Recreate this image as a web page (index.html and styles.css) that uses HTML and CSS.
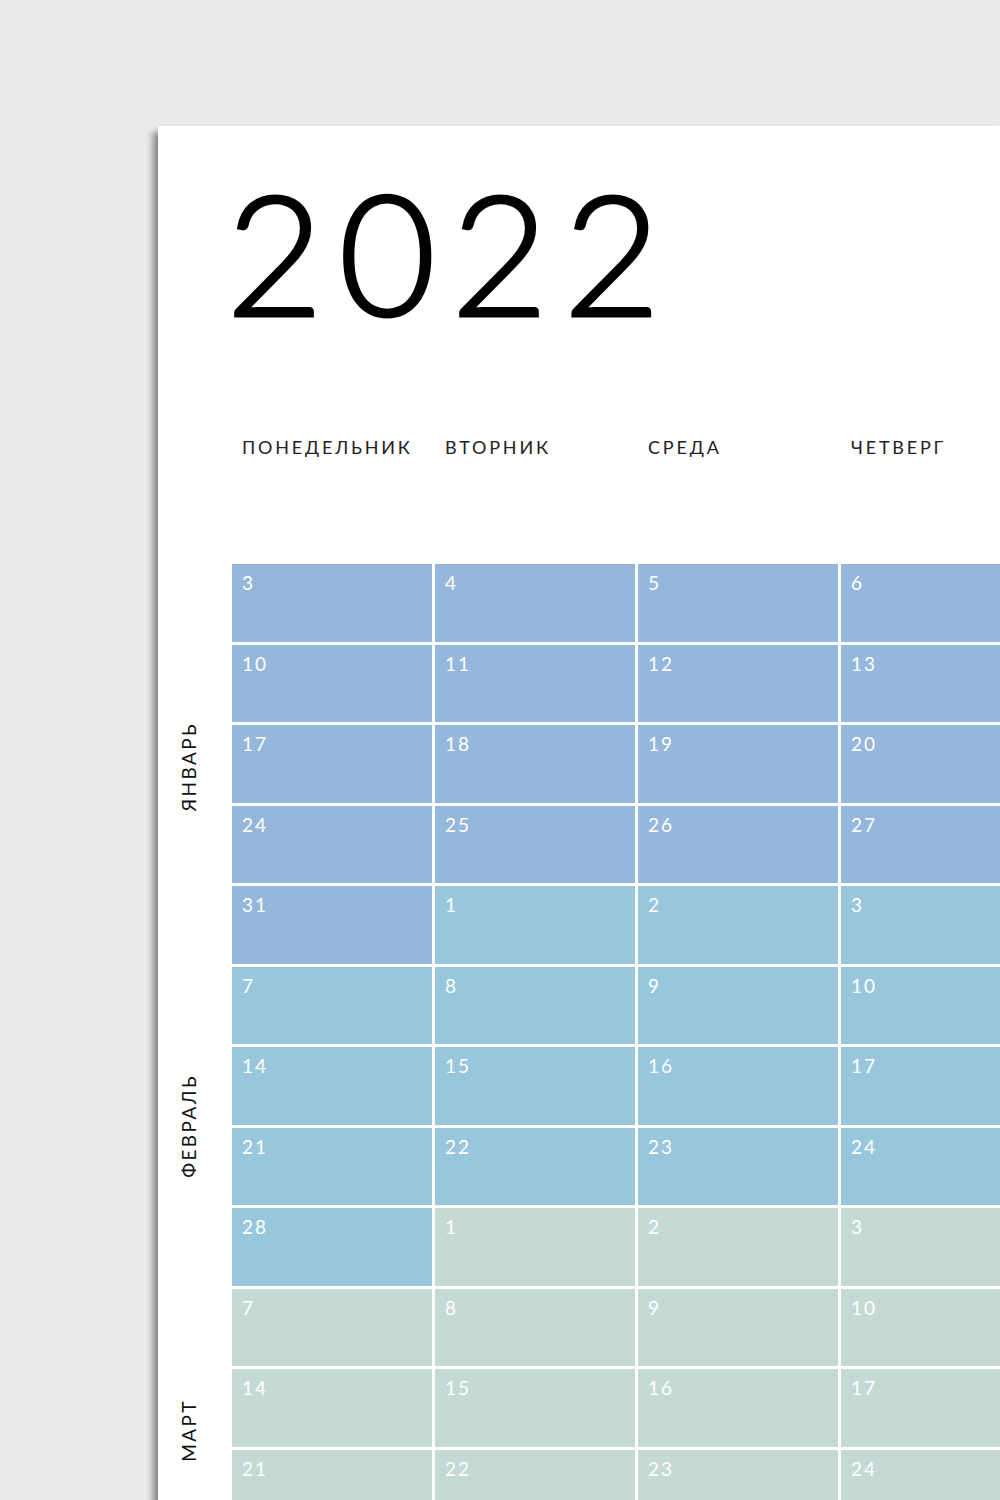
FILE: index.html
```html
<!DOCTYPE html>
<html lang="ru">
<head>
<meta charset="utf-8">
<title>Календарь 2022</title>
<link rel="stylesheet" href="styles.css">
</head>
<body>
<div class="sheet">
  <h1 class="year">2022</h1>
  <div class="days">
    <span></span>
    <span class="day">ПОНЕДЕЛЬНИК</span>
    <span class="day">ВТОРНИК</span>
    <span class="day">СРЕДА</span>
    <span class="day">ЧЕТВЕРГ</span>
    <span class="day">ПЯТНИЦА</span>
    <span class="day">СУББОТА</span>
    <span class="day">ВОСКРЕСЕНЬЕ</span>
  </div>
  <div class="cal">
    <div class="month m-jan"><span>ЯНВАРЬ</span></div>
    <div class="month m-feb"><span>ФЕВРАЛЬ</span></div>
    <div class="month m-mar"><span>МАРТ</span></div>

    <div class="cell jan">3</div><div class="cell jan">4</div><div class="cell jan">5</div><div class="cell jan">6</div><div class="cell jan">7</div><div class="cell jan">8</div><div class="cell jan">9</div>
    <div class="cell jan">10</div><div class="cell jan">11</div><div class="cell jan">12</div><div class="cell jan">13</div><div class="cell jan">14</div><div class="cell jan">15</div><div class="cell jan">16</div>
    <div class="cell jan">17</div><div class="cell jan">18</div><div class="cell jan">19</div><div class="cell jan">20</div><div class="cell jan">21</div><div class="cell jan">22</div><div class="cell jan">23</div>
    <div class="cell jan">24</div><div class="cell jan">25</div><div class="cell jan">26</div><div class="cell jan">27</div><div class="cell jan">28</div><div class="cell jan">29</div><div class="cell jan">30</div>
    <div class="cell jan">31</div><div class="cell feb">1</div><div class="cell feb">2</div><div class="cell feb">3</div><div class="cell feb">4</div><div class="cell feb">5</div><div class="cell feb">6</div>
    <div class="cell feb">7</div><div class="cell feb">8</div><div class="cell feb">9</div><div class="cell feb">10</div><div class="cell feb">11</div><div class="cell feb">12</div><div class="cell feb">13</div>
    <div class="cell feb">14</div><div class="cell feb">15</div><div class="cell feb">16</div><div class="cell feb">17</div><div class="cell feb">18</div><div class="cell feb">19</div><div class="cell feb">20</div>
    <div class="cell feb">21</div><div class="cell feb">22</div><div class="cell feb">23</div><div class="cell feb">24</div><div class="cell feb">25</div><div class="cell feb">26</div><div class="cell feb">27</div>
    <div class="cell feb">28</div><div class="cell mar">1</div><div class="cell mar">2</div><div class="cell mar">3</div><div class="cell mar">4</div><div class="cell mar">5</div><div class="cell mar">6</div>
    <div class="cell mar">7</div><div class="cell mar">8</div><div class="cell mar">9</div><div class="cell mar">10</div><div class="cell mar">11</div><div class="cell mar">12</div><div class="cell mar">13</div>
    <div class="cell mar">14</div><div class="cell mar">15</div><div class="cell mar">16</div><div class="cell mar">17</div><div class="cell mar">18</div><div class="cell mar">19</div><div class="cell mar">20</div>
    <div class="cell mar">21</div><div class="cell mar">22</div><div class="cell mar">23</div><div class="cell mar">24</div><div class="cell mar">25</div><div class="cell mar">26</div><div class="cell mar">27</div>
  </div>
</div>
</body>
</html>
```
FILE: styles.css
```css
html, body {
  margin: 0;
  padding: 0;
  background: #ebebeb;
  overflow: hidden;
  height: 1500px;
}
body {
  font-family: Lato, "Noto Sans", sans-serif;
  color: #111;
}
.sheet {
  margin: 126px 0 0 158px;
  height: 1400px;
  background: #fff;
  box-shadow: -5px 6px 7px rgba(0, 0, 0, 0.45);
  overflow: hidden;
}
.year {
  margin: 0;
  padding: 25px 0 0 68px;
  font-weight: 300;
  font-size: 168px;
  line-height: 200px;
  letter-spacing: 15px;
  color: #000;
  -webkit-text-stroke: 3px #000;
  height: 200px;
}
.days {
  display: grid;
  grid-template-columns: 71px repeat(7, 200px);
  column-gap: 3px;
  margin-top: 85px;
  height: 128px;
}
.day {
  padding-left: 10px;
  font-size: 18px;
  letter-spacing: 2.8px;
  line-height: 22px;
  color: #222;
  white-space: nowrap;
}
.cal {
  display: grid;
  grid-template-columns: 71px repeat(7, 200px);
  grid-auto-rows: 77.5px;
  column-gap: 3px;
  row-gap: 3px;
}
.month {
  grid-column: 1;
  display: flex;
  align-items: center;
  justify-content: center;
  padding-right: 10px;
}
.month span {
  writing-mode: vertical-rl;
  transform: rotate(180deg);
  font-size: 19px;
  letter-spacing: 2.4px;
  color: #111;
}
.m-jan { grid-row: 1 / 6; padding-top: 6px; }
.m-feb { grid-row: 6 / 10; }
.m-mar { grid-row: 10 / 14; padding-bottom: 36px; }
.cell {
  padding: 8px 0 0 10px;
  font-size: 19px;
  font-weight: 400;
  letter-spacing: 2px;
  line-height: 22px;
  color: #fff;
}
.cal > .cell:nth-child(7n + 4) { grid-column: 2; }
.jan { background: #96b7dc; }
.feb { background: #98c6dc; }
.mar { background: #c5dad4; }
```
